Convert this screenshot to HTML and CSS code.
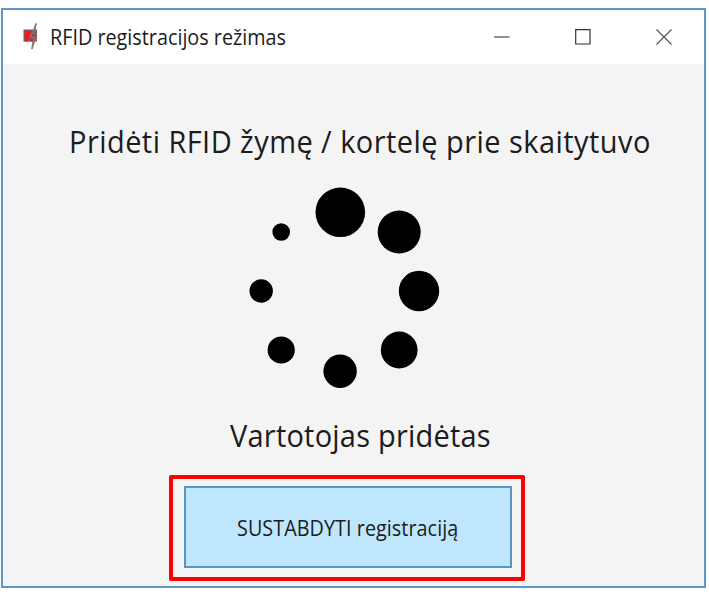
FILE: index.html
```html
<!DOCTYPE html>
<html lang="lt">
<head>
<meta charset="utf-8">
<title>RFID registracijos režimas</title>
<link rel="stylesheet" href="styles.css">
</head>
<body>
<main class="window">
  <header class="titlebar">
    <svg class="app-icon" width="16" height="28" viewBox="0 0 16 28">
      <path d="M1.500 7.500h13.500v12h-13.500z" fill="#8d5050"/>
      <path d="M3 9h8L6 19.500H3z" fill="#ed1c24"/>
      <path d="M8 19.500l3-8 3-1-1 9z" fill="#b8352f"/>
      <path d="M14 1.500Q13 7 10 11.500L8.500 15h3.500L10 27" fill="none" stroke="#777" stroke-width="1.700"/>
      <path d="M14 1.500L12.500 12 15 13 10 27" fill="none" stroke="#858080" stroke-width="1"/>
    </svg>
    <h1 class="title">RFID registracijos režimas</h1>
    <div class="controls">
      <svg width="16" height="16" viewBox="0 0 16 16"><path d="M0 8h15.500" stroke="#555" stroke-width="1.300"/></svg>
      <svg width="16" height="16" viewBox="0 0 16 16"><path d="M.7.700h14.300v14.300H.7z" fill="none" stroke="#333" stroke-width="1.200"/></svg>
      <svg width="16" height="16" viewBox="0 0 16 16"><path d="M.5.500l15 15m0-15l-15 15" stroke="#555" stroke-width="1.200"/></svg>
    </div>
  </header>
  <section class="content">
    <p class="message prompt"><span>Pridėti RFID žymę / kortelę prie skaitytuvo</span></p>
    <svg class="spinner" width="210" height="215" viewBox="0 0 210 215">
      <circle cx="100.300" cy="32.300" r="24.800"/>
      <circle cx="159.200" cy="52" r="21.500"/>
      <circle cx="179" cy="111" r="20.200"/>
      <circle cx="159.200" cy="170" r="18.400"/>
      <circle cx="100.100" cy="191.200" r="16.700"/>
      <circle cx="41.200" cy="170" r="13.600"/>
      <circle cx="21.200" cy="111" r="11.700"/>
      <circle cx="41.200" cy="52" r="8.800"/>
    </svg>
    <p class="message status"><span>Vartotojas pridėtas</span></p>
    <div class="highlight">
      <button class="stop" type="button"><span>SUSTABDYTI registraciją</span></button>
    </div>
  </section>
</main>
</body>
</html>
```
FILE: styles.css
```css
* { box-sizing: border-box; }
body { margin: 0; background: #fff; font-family: "Open Sans", "Noto Sans", sans-serif; color: #1c1c1c; }
.window {
  width: 705px;
  height: 580px;
  margin: 8px 0 0 1px;
  border: 2px solid #5e96c6;
  background: #f4f4f4;
}
.titlebar {
  display: flex;
  align-items: center;
  height: 54px;
  padding-left: 19px;
  background: #fff;
}
.app-icon { margin-top: -2px; }
.title {
  width: 400px;
  margin: 0 0 0 12px;
  font-size: 21.5px;
  font-weight: 400;
  line-height: 30px;
  white-space: nowrap;
  transform: scaleX(.92);
  transform-origin: left;
}
.controls { display: flex; gap: 65px; margin-left: 44px; margin-top: -1px; }
.controls svg { flex: none; }
.content { display: flex; flex-direction: column; }
.message { margin: 0; height: 44px; font-size: 31.5px; line-height: 44px; white-space: nowrap; }
.message span, .stop span { display: inline-block; transform: scaleX(.92); transform-origin: left; }
.prompt { margin: 55px 0 0 66px; letter-spacing: .49px; }
.spinner { margin: 17px 0 0 237px; }
.status { margin: 18px 0 0 227px; letter-spacing: .24px; }
.highlight {
  width: 356px;
  height: 106px;
  margin: 18px 0 0 166px;
  padding: 7px 10px;
  border: 4px solid #f00;
  border-radius: 2px;
}
.stop {
  display: block;
  width: 328px;
  height: 82px;
  margin: 0 0 0 1px;
  padding: 0 0 0 51px;
  border: 2px solid #5b96c3;
  background: #bee6fd;
  color: #1c1c1c;
  font: 21.5px "Open Sans", "Noto Sans", sans-serif;
  letter-spacing: .05px;
  text-align: left;
  white-space: nowrap;
}
```
